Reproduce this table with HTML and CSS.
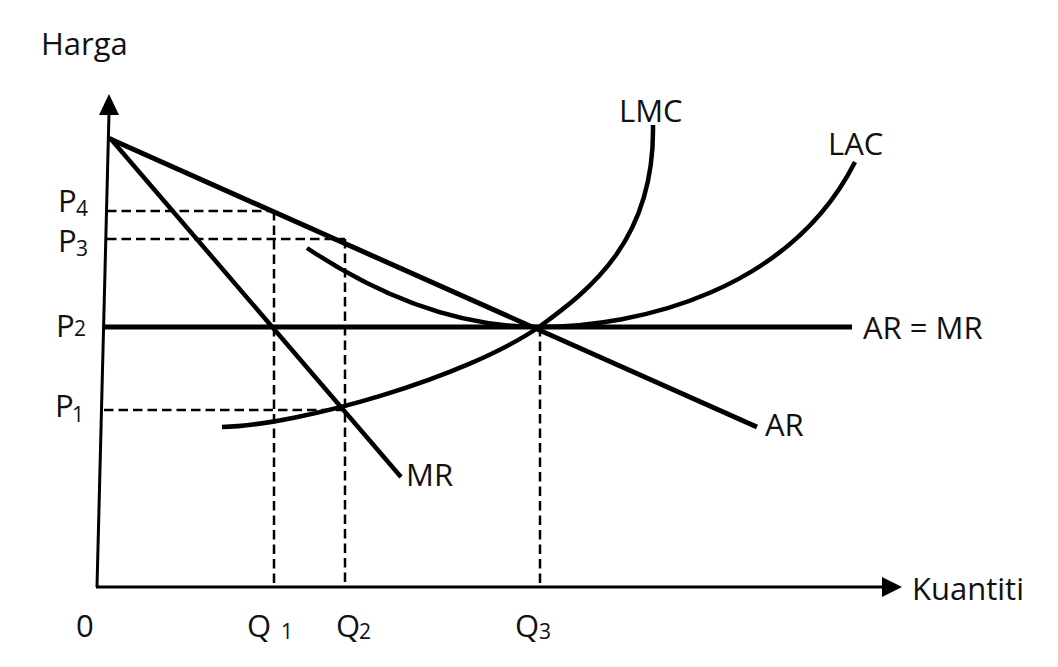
FILE: index.html
```html
<!DOCTYPE html>
<html lang="ms">
<head>
<meta charset="utf-8">
<title>Rajah Kos dan Hasil</title>
<link rel="stylesheet" href="styles.css">
</head>
<body>
<main class="page">
  <svg class="chart" width="1058" height="667" viewBox="0 0 1058 667" xmlns="http://www.w3.org/2000/svg">
    <!-- axes -->
    <line class="axis" x1="109" y1="113" x2="97" y2="587"/>
    <polygon class="arrow" points="109,94 99,115 119,115"/>
    <line class="axis" x1="96" y1="587" x2="885" y2="587"/>
    <polygon class="arrow" points="902,587 882,577 882,597"/>

    <!-- guide lines -->
    <line class="dash" x1="107" y1="211" x2="274" y2="211"/>
    <line class="dash" x1="107" y1="239" x2="345" y2="239"/>
    <line class="dash" x1="104" y1="410" x2="345" y2="410"/>
    <line class="dash" x1="274" y1="211" x2="274" y2="587"/>
    <line class="dash" x1="345" y1="239" x2="345" y2="587"/>
    <line class="dash" x1="540" y1="327" x2="540" y2="587"/>

    <!-- curves -->
    <line class="curve thick" x1="104" y1="327" x2="852" y2="327"/>
    <line class="curve thick" x1="108" y1="138" x2="757" y2="427"/>
    <line class="curve" x1="110" y1="138" x2="401" y2="477"/>
    <path class="curve" d="M307,248 C370,290 450,327 539,327 C640,327 790,290 855,162"/>
    <path class="curve" d="M222,427 C300,425 465,378 539,327 C590,290 655,240 653,125"/>

    <!-- labels -->
    <text class="label" x="41" y="55">Harga</text>
    <text class="label" x="619" y="122">LMC</text>
    <text class="label" x="828" y="155">LAC</text>
    <text class="label" x="863" y="339">AR = MR</text>
    <text class="label" x="765" y="436">AR</text>
    <text class="label" x="406" y="486">MR</text>
    <text class="label" x="912" y="600">Kuantiti</text>
    <text class="label" x="76" y="637">0</text>

    <text class="label" x="247" y="637">Q</text><text class="sub" x="281" y="639">1</text>
    <text class="label" x="336" y="637">Q</text><text class="sub" x="359" y="639">2</text>
    <text class="label" x="515" y="637">Q</text><text class="sub" x="539" y="639">3</text>

    <text class="label" x="58" y="212">P</text><text class="sub" x="76" y="216">4</text>
    <text class="label" x="58" y="252">P</text><text class="sub" x="76" y="256">3</text>
    <text class="label" x="56" y="337">P</text><text class="sub" x="74" y="336">2</text>
    <text class="label" x="55" y="417">P</text><text class="sub" x="72" y="422">1</text>
  </svg>
</main>
</body>
</html>
```

FILE: styles.css
```css
html, body {
  margin: 0;
  padding: 0;
  background: #ffffff;
}

.page {
  width: 1058px;
  height: 667px;
  overflow: hidden;
}

.chart {
  display: block;
}

.axis {
  stroke: #000;
  stroke-width: 3;
}

.arrow {
  fill: #000;
}

.dash {
  stroke: #000;
  stroke-width: 2.5;
  stroke-dasharray: 9.5 5;
}

.curve {
  stroke: #000;
  stroke-width: 4.5;
  fill: none;
}

.curve.thick {
  stroke-width: 5;
}

.label {
  font-family: "Open Sans", "Liberation Sans", sans-serif;
  font-size: 31px;
  fill: #111;
}

.sub {
  font-family: "Open Sans", "Liberation Sans", sans-serif;
  font-size: 21px;
  fill: #111;
}
```
